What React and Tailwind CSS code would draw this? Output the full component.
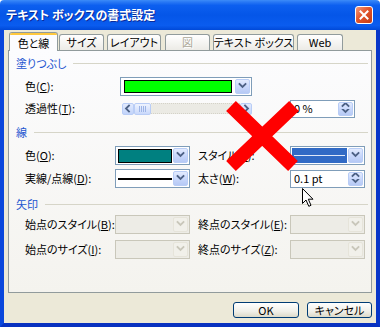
import React from "react";

const FONT = "font-['Noto_Sans_CJK_JP','Noto_Sans_CJK_SC',sans-serif] [font-feature-settings:'palt']";

function Chevron({ dir = "down", color = "#4d6185" }) {
  const d =
    dir === "down"
      ? "M1.5 2 L4.5 5 L7.5 2"
      : dir === "up"
      ? "M1.5 5 L4.5 2 L7.5 5"
      : dir === "left"
      ? "M5 1.5 L2 4.5 L5 7.5"
      : "M3 1.5 L6 4.5 L3 7.5";
  return (
    <svg width="9" height="9" viewBox="0 0 9 9">
      <path d={d} stroke={color} strokeWidth="1.8" fill="none" strokeLinecap="square" />
    </svg>
  );
}

function DropBtn({ disabled }) {
  if (disabled)
    return (
      <div className="w-[15px] h-full flex items-center justify-center rounded-[2px] border border-[#e6e4da] bg-[#f1f0ea]">
        <Chevron color="#c9c7ba" />
      </div>
    );
  return (
    <div className="w-[15px] h-full flex items-center justify-center rounded-[2px] border border-[#b9cdf6] bg-[linear-gradient(to_bottom,#e3ebfe,#c9d8fb_50%,#b6c9f5)]">
      <Chevron />
    </div>
  );
}

function Combo({ className, children, disabled }) {
  return (
    <div
      className={
        "flex h-[19px] p-px gap-px border " +
        (disabled ? "border-[#c9c7ba] bg-[#edece6] " : "border-[#7f9db9] bg-white ") +
        className
      }
    >
      <div className="flex-1 flex items-center">{children}</div>
      <DropBtn disabled={disabled} />
    </div>
  );
}

function Spinner({ className, value }) {
  return (
    <div className={"flex h-[18px] p-px border border-[#7f9db9] bg-white " + className}>
      <div className="flex-1 flex items-center pl-[2px] text-[11px] leading-none text-black">{value}</div>
      <div className="w-[15px] h-full flex flex-col rounded-[2px] border border-[#b9cdf6] bg-[linear-gradient(to_bottom,#e3ebfe,#c9d8fb_50%,#b6c9f5)]">
        <div className="flex-1 flex items-center justify-center overflow-hidden">
          <Chevron dir="up" />
        </div>
        <div className="flex-1 flex items-center justify-center overflow-hidden">
          <Chevron dir="down" />
        </div>
      </div>
    </div>
  );
}

function Slider() {
  return (
    <div className="ml-[2px] w-[130px] h-[13px] flex items-center">
      <div className="w-[12px] h-[12px] flex items-center justify-center rounded-[2px] border border-[#b9cdf6] bg-[linear-gradient(to_bottom,#e3ebfe,#c1d3fa)]">
        <Chevron dir="left" />
      </div>
      <div className="w-[17px] h-[12px] flex items-center justify-center gap-px rounded-[2px] border border-[#b9cdf6] bg-[linear-gradient(to_bottom,#eef3fe,#c9d8fb)]">
        <div className="w-px h-[6px] bg-[#9db4e6]" />
        <div className="w-px h-[6px] bg-[#9db4e6]" />
        <div className="w-px h-[6px] bg-[#9db4e6]" />
        <div className="w-px h-[6px] bg-[#9db4e6]" />
      </div>
      <div className="flex-1 h-[11px] bg-[#ebeae4] border-y border-dotted border-[#d4d2c8]" />
      <div className="w-[12px] h-[12px] flex items-center justify-center rounded-[2px] border border-[#b9cdf6] bg-[linear-gradient(to_bottom,#e3ebfe,#c1d3fa)]">
        <Chevron dir="right" />
      </div>
    </div>
  );
}

function Header({ children, className = "" }) {
  return (
    <div className={"flex items-center h-[14px] gap-[7px] mr-[3px] " + className}>
      <span className="text-[11px] leading-none text-[#1d55d0]">{children}</span>
      <div className="flex-1 h-px bg-[#d6d5c8]" />
    </div>
  );
}

function Label({ className, children }) {
  return <div className={"shrink-0 text-[11px] leading-none text-black whitespace-nowrap " + className}>{children}</div>;
}

function Tab({ className, children, disabled }) {
  return (
    <div
      className={
        "h-[16px] flex items-center justify-center whitespace-nowrap rounded-t-[3px] border border-b-0 border-[#919b9c] bg-[linear-gradient(to_bottom,#ffffff,#ecebe6)] text-[11px] leading-none " +
        (disabled ? "text-[#aca899] [text-shadow:1px_1px_#ffffff] " : "text-black ") +
        className
      }
    >
      {children}
    </div>
  );
}

export default function App() {
  return (
    <div className={"relative w-[380px] h-[327px] overflow-hidden flex flex-col select-none " + FONT}>
      {/* Title bar */}
      <div className="h-[30px] flex items-center justify-between pl-[6px] pr-[7px] rounded-t-[4px] bg-[linear-gradient(to_bottom,#3d8cf8_0%,#2a7af5_6%,#0c5fef_18%,#0556e8_50%,#0a5cef_85%,#0049d8_100%)]">
        <span className="text-[12px] leading-none font-bold text-white [text-shadow:1px_1px_#0b2a99]">
          テキスト ボックスの書式設定
        </span>
        <div className="w-[18px] h-[18px] rounded-[3px] border border-white flex items-center justify-center bg-[linear-gradient(135deg,#f49a7c,#e2552b_45%,#c43a12)]">
          <svg width="10" height="10" viewBox="0 0 10 10">
            <path d="M1.5 1.5 L8.5 8.5 M8.5 1.5 L1.5 8.5" stroke="white" strokeWidth="2" strokeLinecap="square" />
          </svg>
        </div>
      </div>

      {/* Body */}
      <div className="flex-1 flex flex-col bg-[#ece9d8] border-l-4 border-r-4 border-b-4 border-l-[#0a47dc] border-r-[#0836c8] border-b-[#0831c0] pl-[4px] pr-[4px] pt-[2px]">
        {/* Tabs */}
        <div className="h-[18px] flex items-end pl-px relative z-10">
          <div className="w-[49px] h-[19px] -mb-px flex flex-col rounded-t-[3px] border border-b-0 border-[#919b9c] bg-[#fcfcfe] overflow-hidden">
            <div className="h-[3px] -mx-px -mt-px bg-[#ffc83c] border-t border-[#e68b2c]" />
            <div className="flex-1 flex items-center justify-center text-[11px] leading-none text-black">色と線</div>
          </div>
          <Tab className="w-[45px] ml-px">サイズ</Tab>
          <Tab className="w-[54px] ml-[3px]">レイアウト</Tab>
          <Tab className="w-[45px] ml-[4px]" disabled>
            図
          </Tab>
          <Tab className="w-[81px] ml-[3px]">テキスト ボックス</Tab>
          <Tab className="w-[46px] ml-[3px]">Web</Tab>
        </div>

        {/* Panel */}
        <div className="h-[243px] border border-[#919b9c] bg-[linear-gradient(to_bottom,#fcfcfe,#f4f3ee)] pl-[7px] flex flex-col">
          <Header className="mt-[5px]">塗りつぶし</Header>

          <div className="mt-[7px] h-[19px] flex items-center">
            <Label className="pl-[9px] w-[104px]">
              色(<u>C</u>):
            </Label>
            <Combo className="w-[132px]">
              <div className="mx-[2px] h-[13px] flex-1 bg-[#00ff00] border border-black" />
            </Combo>
          </div>

          <div className="mt-[3px] h-[19px] flex items-center">
            <Label className="pl-[9px] w-[104px]">
              透過性(<u>T</u>):
            </Label>
            <Slider />
            <Spinner className="ml-[38px] w-[65px]" value="0 %" />
          </div>

          <Header className="mt-[7px]">線</Header>

          <div className="mt-[7px] h-[19px] flex items-center">
            <Label className="pl-[9px] w-[99px]">
              色(<u>O</u>):
            </Label>
            <Combo className="w-[75px]">
              <div className="ml-px h-[14px] flex-1 bg-[#008080] border border-black" />
            </Combo>
            <Label className="pl-[8px] w-[100px]">
              スタイル(<u>S</u>):
            </Label>
            <Combo className="w-[75px]">
              <div className="h-full flex-1 bg-[#316ac5] flex items-center px-[2px]">
                <div className="flex-1 h-px bg-[#dfe8f8]" />
              </div>
            </Combo>
          </div>

          <div className="mt-[4px] h-[19px] flex items-center">
            <Label className="pl-[9px] w-[99px]">
              実線/点線(<u>D</u>):
            </Label>
            <Combo className="w-[75px]">
              <div className="ml-px flex-1 h-[2px] bg-black" />
            </Combo>
            <Label className="pl-[8px] w-[100px]">
              太さ(<u>W</u>):
            </Label>
            <Spinner className="w-[75px]" value="0.1 pt" />
          </div>

          <Header className="mt-[9px]">矢印</Header>

          <div className="mt-[4px] h-[19px] flex items-center">
            <Label className="pl-[9px] w-[99px]">
              始点のスタイル(<u>B</u>):
            </Label>
            <Combo className="w-[75px]" disabled />
            <Label className="pl-[8px] w-[100px]">
              終点のスタイル(<u>E</u>):
            </Label>
            <Combo className="w-[75px]" disabled />
          </div>

          <div className="mt-[6px] h-[19px] flex items-center">
            <Label className="pl-[9px] w-[99px]">
              始点のサイズ(<u>I</u>):
            </Label>
            <Combo className="w-[75px]" disabled />
            <Label className="pl-[8px] w-[100px]">
              終点のサイズ(<u>Z</u>):
            </Label>
            <Combo className="w-[75px]" disabled />
          </div>
        </div>

        {/* Buttons */}
        <div className="mt-[9px] flex justify-end gap-[8px]">
          <button className="w-[66px] h-[16px] rounded-[3px] border border-[#003c74] bg-[linear-gradient(to_bottom,#ffffff,#f0efe8_60%,#dcd9c9)] text-[11px] leading-none text-black flex items-center justify-center">
            OK
          </button>
          <button className="w-[65px] h-[16px] rounded-[3px] border border-[#003c74] bg-[linear-gradient(to_bottom,#ffffff,#f0efe8_60%,#dcd9c9)] text-[11px] leading-none text-black flex items-center justify-center">
            キャンセル
          </button>
        </div>
      </div>

      {/* Red X overlay */}
      <svg className="absolute left-[215px] top-[90px]" width="95" height="95" viewBox="0 0 95 95">
        <path d="M16 16 L78 76 M79 16 L16 76" stroke="#ff0000" strokeWidth="14" strokeLinecap="butt" />
      </svg>

      {/* Mouse cursor */}
      <svg className="absolute left-[302px] top-[188px]" width="13" height="20" viewBox="0 0 13 20">
        <path d="M0.5 0.5 L0.5 15.5 L4 12 L6.8 18.3 L9 17.3 L6.3 11.2 L11 11.2 Z" fill="white" stroke="black" strokeWidth="1" />
      </svg>
    </div>
  );
}
